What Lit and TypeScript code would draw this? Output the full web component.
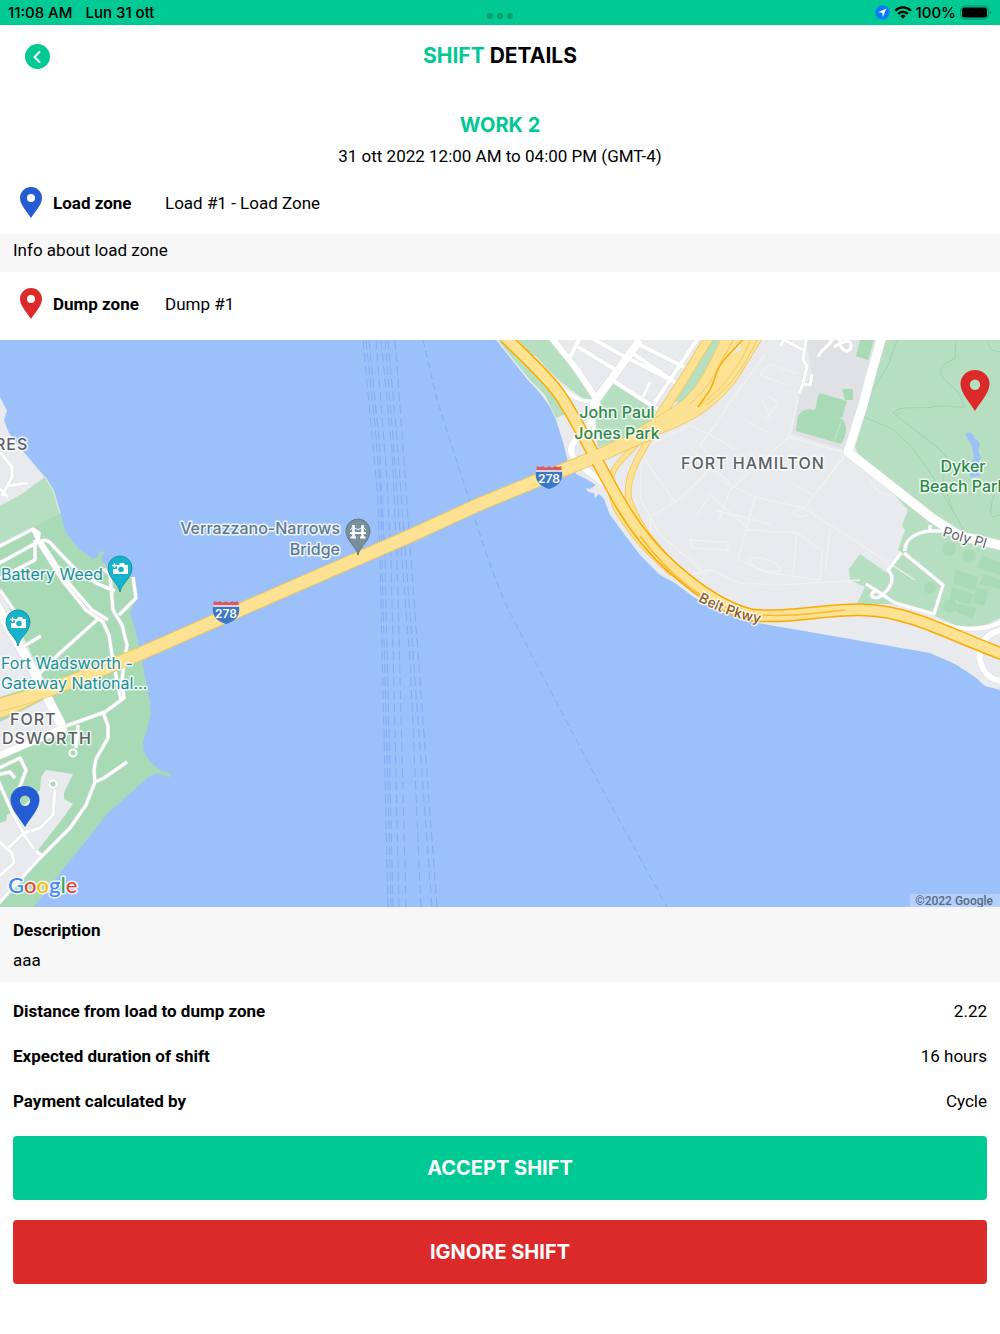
import { LitElement, html, svg, css } from "lit";
import { customElement } from "lit/decorators.js";

type Label = { x: number; y: number; text: string; kind: string };

const labels: Label[] = [
  { x: -5, y: 450, text: "RES", kind: "area" },
  { x: 681, y: 469, text: "FORT HAMILTON", kind: "area" },
  { x: 10, y: 725, text: "FORT", kind: "area" },
  { x: 2, y: 744, text: "DSWORTH", kind: "area" },
  { x: 617, y: 418, text: "John Paul", kind: "park middle" },
  { x: 617, y: 439, text: "Jones Park", kind: "park middle" },
  { x: 963, y: 472, text: "Dyker", kind: "park middle" },
  { x: 963, y: 492, text: "Beach Park", kind: "park middle" },
  { x: 340, y: 534, text: "Verrazzano-Narrows", kind: "bridge end" },
  { x: 340, y: 555, text: "Bridge", kind: "bridge end" },
  { x: 1, y: 580, text: "Battery Weed", kind: "sight" },
  { x: 1, y: 669, text: "Fort Wadsworth -", kind: "sight" },
  { x: 1, y: 689, text: "Gateway National…", kind: "sight" },
];

const ferryLines = [
  "M363 340L371 425L378 500L380 560L388 907",
  "M366 340L375 425L381 500L382 560L391 907",
  "M369 340L379 440L385 560L393 907",
  "M376 340L387 480L391 560L399 907",
  "M381 340L392 450L397 560L406 907",
  "M385 340L394 450L402 560L410 660L421 907",
  "M388 340L397 440L406 560L432 907",
  "M395 340L404 460L411 560L437 907",
];

/* Local streets around the two shores: stroke width and course. */
const streets: Array<[number, string]> = [
  [9, "M-4 604L32 668L62 726"],
  [7, "M-4 757L66 727"],
  [3, "M-4 548L33 529L39 533L38 542L-4 565M35 540L35 560L0 578M33 530L40 545L62 580L86 610L103 622L109 635L112 655L119 690L121 700"],
  [3, "M38 543C44 538 49 540 54 547L78 572L98 584L115 591M41 541L66 580L92 610L108 620M104 569L110 575L113 610L122 625L127 645L124 665L122 680L124 698L105 712L66 726"],
  [3, "M133 577L136 598L119 615M98 619L60 653L38 675M0 590L15 612M24 646L41 636"],
  [3, "M103 712L108 726L108 738L96 759L94 770L95 782L86 805L70 828L38 860L-3 905M95 782L104 778L127 762M78 725L76 748"],
  [3, "M55 790L53 815L40 828L24 833L8 848M-3 778L12 812L25 836L34 849M36 851L41 855M-3 840L12 853L14 863L-3 878"],
  [3, "M-3 769L20 758L26 770L18 792M-3 775L10 772L15 778M0 452L12 467L12 477L2 496M8 486L26 483L28 484M-2 487L8 497"],
  [8, "M640 340L596 400L592 415"],
  [6, "M551 337L575 367L598 401"],
  [4, "M533 357L560 386C575 400 585 403 598 401"],
  [6, "M597 400C600 425 573 435 571 448C569 460 590 473 610 488"],
  [4, "M592 402L594 430L598 440"],
  [4, "M580 338L568 361M578 347L614 369M584 334L620 354L682 386M640 345L690 370M698 338L654 404M612 380L657 409M632 353L673 381"],
  [3, "M650 382L643 397M780 346L784 340L803 350M806 340L803 360L807 366L803 384L810 385L812 374M803 384L799 393M842 335C834 348 851 358 851 345C850 338 842 342 834 347M818 357C822 347 830 347 833 338"],
  [9, "M882 336L870 378L863 405L848 452L932 518L960 536L1004 546"],
  [3, "M905 551C904 539 917 532 930 531L946 531M930 532L930 525"],
  [3, "M904 553L943 585L934 614L895 603L874 589L866 584M901 553L888 570C896 578 891 588 882 595C875 602 866 594 876 591"],
  [4, "M1003 621C980 634 955 629 933 621"],
  [6, "M1003 630C984 632 976 650 981 664C985 676 994 681 1004 681"],
];

const faintStreets =
  "M798 400L789 437L730 490L719 520M789 437L847 453L804 508L755 497L720 480M804 508L915 580M755 497L738 560L770 573L820 580L822 550L797 533L745 530M640 453L675 502L650 517L652 560L690 575L710 570L740 583L780 585L860 580M641 460L641 500L660 535L690 560L706 575M675 502L700 480L715 460L700 445L715 425L735 395L765 355M640 450L690 425L720 440L735 450M697 515L710 495L750 530M690 540L728 542L728 550L692 548ZM715 510L770 524M797 533L793 575M830 530L825 570M770 364L797 374M768 365L760 375L790 386M768 396L779 403L765 420M762 398L770 418M745 420L770 434M690 448L730 483M790 482L813 495M804 508C792 510 790 515 800 517L808 515M871 480C875 492 885 496 894 496M748 560C760 553 783 565 780 570C770 575 755 570 748 560";

const darkGreens =
  "M819 393L847 401L842 418L815 410ZM797 422C797 412 805 407 815 410L838 417C847 420 849 432 841 444L796 431ZM842 389L853 389L853 400L845 400ZM860 340L874 340L868 360L856 356ZM982 555L1000 563V575L977 567ZM956 570L978 577L975 590L953 583ZM952 587L974 594L970 605L950 598ZM984 574L1000 580V589L980 584ZM977 588L988 590L984 606L973 602ZM958 604L976 608L973 619L956 612Z";

function road(d: string, width: number, fill: string, edge: string, casing = 2) {
  return svg`
    <path d=${d} fill="none" stroke=${edge} stroke-width=${width + casing} stroke-linejoin="round" />
    <path d=${d} fill="none" stroke=${fill} stroke-width=${width} stroke-linejoin="round" />`;
}

function shield(x: number, y: number) {
  return svg`
    <g transform="translate(${x} ${y})">
      <path d="M-13 -6C-14 2 -12 8 0 12C12 8 14 2 13 -6Z" fill="#3d78c8" />
      <path d="M-12 -11Q-9 -9 -6 -11Q-3 -8 0 -11Q3 -8 6 -11Q9 -9 12 -11L13 -6H-13Z" fill="#d9595e" />
      <path d="M-13 -6H13" stroke="#fff" stroke-width="1.4" />
      <text class="shield" x="0" y="6">278</text>
    </g>`;
}

const DROP = "M0 36C-1 28 -12 22 -12 12A12 12 0 0 1 12 12C12 22 1 28 0 36Z";

function cameraPin(x: number, y: number) {
  return svg`
    <g transform="translate(${x} ${y})">
      <path d=${DROP} fill="#17b2cb" stroke="#1295a9" />
      <path d="M-3 9L-1 9L0 7H4L5 9H8V18H-7V13H-3Z" fill="#fff" />
      <circle cx="1" cy="13.500" r="2.800" fill="#17b2cb" />
      <path d="M-5.500 7V12M-8 9.500H-3" stroke="#fff" stroke-width="1.300" />
    </g>`;
}

function bridgePin(x: number, y: number) {
  return svg`
    <g transform="translate(${x} ${y})">
      <path d=${DROP} fill="#78909c" stroke="#5f7682" />
      <path d="M-4.500 6V19M4.500 6V19" stroke="#fff" stroke-width="2.500" />
      <path d="M-8 14H8M-7.500 18.500H-2M2 18.500H7.500" stroke="#fff" stroke-width="2" />
      <path d="M-8 11Q-6 10 -5 7Q0 14 5 7Q6 10 8 11" stroke="#fff" fill="none" />
    </g>`;
}

function zonePin(x: number, y: number, fill: string) {
  return svg`
    <path transform="translate(${x} ${y})" fill=${fill} fill-rule="evenodd"
      d="M0 41C-4 34 -14.500 23 -14.500 14A14.500 14 0 0 1 14.500 14C14.500 23 4 34 0 41ZM0 9.500A5.200 5.200 0 1 0 0 19.900A5.200 5.200 0 1 0 0 9.500Z" />`;
}

@customElement("zone-map")
export class ZoneMap extends LitElement {
  static styles = css`
    :host {
      display: block;
    }
    svg {
      display: block;
      width: 100%;
      height: auto;
      background: #9cc0fa;
    }
    text {
      font-family: Inter, "Liberation Sans", sans-serif;
      font-size: 16px;
      paint-order: stroke;
      stroke: #fff;
      stroke-opacity: 0.8;
      stroke-width: 3px;
      stroke-linejoin: round;
    }
    .middle {
      text-anchor: middle;
    }
    .end {
      text-anchor: end;
    }
    .area {
      font-weight: 500;
      letter-spacing: 1px;
      fill: #5b5f66;
    }
    .park {
      fill: #2c8a4b;
      font-weight: 500;
    }
    .bridge {
      fill: #5f7b8b;
      font-weight: 500;
    }
    .sight {
      fill: #1a8f9b;
    }
    .street {
      font-size: 14px;
      fill: #5f6368;
    }
    .parkway {
      fill: #8a5a2b;
      font-weight: 500;
    }
    .shield {
      font-size: 12px;
      font-weight: 600;
      fill: #fff;
      stroke: none;
      text-anchor: middle;
    }
    .google {
      font-family: Lato, sans-serif;
      font-size: 22px;
      font-weight: 500;
    }
    .g-blue {
      fill: #4285f4;
    }
    .g-red {
      fill: #ea4335;
    }
    .g-yellow {
      fill: #fbbc04;
    }
    .g-green {
      fill: #34a853;
    }
    .copyright {
      font-family: Roboto, "Liberation Sans", sans-serif;
      font-size: 12px;
      font-weight: 500;
      fill: #5b6a84;
      stroke: none;
    }
  `;

  render() {
    const bridge = "M-6 706C30 698 60 687 142 653L226 616L410 536L480 504L595 457L650 433";
    const belt =
      "M505 337C525 357 545 374 560 395C575 418 584 436 595 457L613 490C630 522 650 548 674 569C700 592 725 609 752 615C790 619 830 608 865 610C910 611 950 635 1005 655";
    return html`
      <svg viewBox="0 340 1000 567" role="img" aria-label="Map of load and dump zones">
        <path fill="#e8eaed" d="M0 397L7 411L4 420L9 433L22 450L45 477L60 513L38 640L0 640Z" />
        <path fill="#b6dfc1" d="M0 506L22 494L45 477L53 490L60 513L40 530L0 550Z" />
        <path
          fill="#a8dab5"
          d="M0 545L38 525L61 513L64 528L69 537L80 550L93 559L98 557L99 552L103 551L104 554L101 558L103 563L110 569L132 577L137 598L130 612L135 629L142 660L150 703L151 713L148 727L143 742L143 750L150 762L160 770L172 774L170 777L157 773L150 776L107 814L90 836L60 873L34 907L0 907Z"
        />
        <path
          fill="#e8eaed"
          d="M0 588L14 618L42 676L40 684L0 697ZM0 722L43 700L60 727L0 752ZM0 823L6 821L7 815L24 805L40 790L41 777L46 770L73 774L64 793L64 799L73 804L60 822L38 850L42 857L0 903Z"
        />
        <path d="M45 477L53 490L60 513" fill="none" stroke="#d5e6da" stroke-width="1.5" />

        <path
          fill="#e8eaed"
          d="M496 340L512 360L527 379L540 393L550 407L556 420L563 442L568 462L576 474L588 480L596 485L590 489L586 488L588 492L594 493L595 498L599 494L604 499L610 515L625 535L640 555L660 575L675 583L692 596L720 612L758 623L850 639L930 653L955 664L975 677L985 686L1000 690V340Z"
        />
        <path fill="#b6dfc1" d="M498 340L512 358L530 380L545 395L556 418L567 413L545 380L515 340ZM518 340H554L572 368L598 400L586 401L560 381L535 357Z" />
        <path fill="#b6dfc1" d="M614 381L657 408L648 430L598 447L593 420L600 402ZM708 340H726L684 405L671 400Z" />
        <path fill="#dfe1e5" d="M806 340H880L846 450L792 434L800 392L812 375Z" />
        <path
          fill="#b6dfc1"
          d="M882 340L863 405L853 440L857 452L908 510L902 525L905 530L898 550L903 553L887 573L860 554L849 569L850 580L865 587L857 604L890 604L930 614L960 627L985 625L1000 618V340Z"
        />
        <path fill="#a8dab5" d=${darkGreens} />
        <path d="M841 422L835 439" stroke="#c3e5cc" />
        <g fill="#a8dab5">
          <circle cx="949" cy="549" r="7" />
          <circle cx="969" cy="556" r="7" />
          <circle cx="950" cy="606" r="7" />
          <circle cx="930" cy="588" r="6" />
        </g>
        <g fill="none" stroke="#a0d2ad">
          <path d="M897 340L888 366L872 391L864 417L892 429L912 447L935 480L954 513L944 485L942 470C955 457 938 449 928 440L893 413C898 405 920 409 932 407C945 404 955 408 965 407L958 392L943 378C937 368 945 362 955 359L956 340" />
          <path d="M954 513L966 534M987 340L991 350L1000 352M1000 480C994 490 988 515 992 517L1000 515" />
        </g>
        <path fill="#9cc0fa" d="M965 435C968 431 974 433 974 438C980 440 981 446 978 450L981 458L978 464L980 476L971 477L967 468L974 458L972 446Z" />

        <g fill="none" stroke="#84acf4">
          ${ferryLines.map((d) => svg`<path d=${d} stroke-dasharray="9 4" />`)}
          <path
            stroke-dasharray="7 4"
            d="M423 340L437 400L468 496C478 530 494 580 510 613L540 671L600 785L667 907"
          />
        </g>

        <path d=${faintStreets} fill="none" stroke="#f1f1ef" stroke-width="1.3" />
        ${streets.map(
          ([w, d]) => svg`<path d=${d} fill="none" stroke="#dcdfe3" stroke-width=${w + 1} stroke-linejoin="round" />`,
        )}
        ${streets.map(
          ([w, d]) => svg`<path d=${d} fill="none" stroke="#fff" stroke-width=${w} stroke-linejoin="round" />`,
        )}
        <g fill="#a8dab5" stroke="#fff" stroke-width="2">
          <circle cx="53" cy="784" r="3.5" />
          <circle cx="73" cy="753" r="3.5" />
        </g>

        ${road("M-6 716C10 712 22 705 40 696", 6, "#fde293", "#f1cb67")}
        ${road("M643 434C636 450 618 458 612 474C605 500 622 520 642 545L672 574", 4, "#fde293", "#f1cb67")}
        ${road("M658 424C643 450 624 475 629 500C640 530 655 545 672 564", 5, "#fde293", "#f1cb67")}
        ${road("M710 336L683 380L656 422", 8, "#fde293", "#f1cb67")}
        <path
          fill="#fde293"
          stroke="#f1cb67"
          d="M722 336C712 358 703 378 690 393C682 402 672 408 660 415L630 433L640 443L662 433C680 426 695 419 707 410C722 398 732 388 740 375L764 336Z"
        />
        <path d="M640 430L664 419L678 418L645 438L620 447Z" fill="#fde293" />
        <path fill="none" stroke="#f1cb67" d="M735 336C722 362 712 385 690 404M752 336C742 362 728 385 700 405M759 336C745 365 733 385 706 405M716 372C722 355 730 350 735 336" />
        <path d="M741 342L731 355L740 350Z" fill="#e8eaed" />
        <path d="M746 336L724 360C716 368 716 378 710 390L698 407" fill="none" stroke="#f9ab00" stroke-width="1.5" />
        ${road(bridge, 12, "#fde293", "#ecc966")}
        ${road(belt, 10, "#fde293", "#f9ab00", 3)}
        <path d="M640 536C670 575 700 603 748 614C785 618 815 613 845 610" fill="none" stroke="#f9b932" stroke-width="1.5" />
        <path d="M580 463L612 450" stroke="#fde293" stroke-width="12" />

        ${shield(549, 477)} ${shield(226, 612)}
        ${labels.map((l) => svg`<text class=${l.kind} x=${l.x} y=${l.y}>${l.text}</text>`)}
        <path id="belt-path" d="M698 601C712 608 726 617 768 625" fill="none" />
        <text class="street parkway"><textPath href="#belt-path">Belt Pkwy</textPath></text>
        <text class="street" transform="translate(942 536) rotate(16)">Poly Pl</text>

        ${cameraPin(120, 556)} ${cameraPin(18, 610)} ${bridgePin(358, 519)}
        ${zonePin(25, 786, "#265cd3")} ${zonePin(975, 370, "#dc2a2a")}

        <text class="google" x="8" y="893"
          ><tspan class="g-blue">G</tspan><tspan class="g-red">o</tspan><tspan class="g-yellow">o</tspan
          ><tspan class="g-blue">g</tspan><tspan class="g-green">l</tspan><tspan class="g-red">e</tspan></text
        >
        <rect x="910" y="894" width="90" height="13" fill="#fff" fill-opacity="0.25" />
        <text class="copyright end" x="993" y="905">©2022 Google</text>
      </svg>
    `;
  }
}

@customElement("app-root")
export class AppRoot extends LitElement {
  static styles = css`
    :host {
      display: block;
      background: #fff;
      color: #000;
      font: 17px/24px Roboto, "Liberation Sans", sans-serif;
    }
    * {
      box-sizing: border-box;
    }
    h1,
    h2,
    h3,
    p,
    dl,
    dd {
      margin: 0;
    }
    h1,
    h2,
    .action {
      font-family: Inter, "Liberation Sans", sans-serif;
      font-weight: 700;
    }
    .status {
      display: grid;
      grid-template-columns: 1fr auto 1fr;
      align-items: center;
      height: 25px;
      padding: 0 8px;
      background: #00c993;
      font: 500 15px/24px Inter, "Liberation Sans", sans-serif;
    }
    .clock {
      display: flex;
      gap: 13px;
    }
    .dots {
      display: flex;
      gap: 4px;
      padding-top: 6px;
    }
    .dot {
      width: 6px;
      height: 6px;
      border-radius: 50%;
      background: #00a06c;
    }
    .indicators {
      display: flex;
      align-items: center;
      justify-content: flex-end;
      gap: 4px;
    }
    svg {
      display: block;
    }
    .header {
      display: grid;
      grid-template-columns: 25px 1fr 25px;
      align-items: center;
      padding: 15px 25px;
    }
    .back {
      width: 25px;
      height: 25px;
      padding: 0;
      border: 0;
      border-radius: 50%;
      background: #00c993;
      cursor: pointer;
    }
    h1 {
      font-size: 21px;
      line-height: 32px;
      text-align: center;
    }
    .accent {
      color: #00c993;
    }
    .summary {
      padding: 24px 13px 0;
      text-align: center;
    }
    h2 {
      font-size: 20px;
      line-height: 28px;
      color: #00c993;
    }
    .when {
      padding-top: 5px;
    }
    .zone {
      display: grid;
      grid-template-columns: 22px 101px 1fr;
      column-gap: 11px;
      align-items: center;
      padding: 19px 13px 16px 20px;
    }
    .dump {
      padding-top: 16px;
      padding-bottom: 21px;
    }
    h3,
    dt {
      font-size: 17px;
      line-height: 24px;
      font-weight: 700;
    }
    .note {
      padding: 4px 13px 10px;
      background: #f7f7f7;
    }
    .description {
      display: grid;
      gap: 6px;
      padding: 11px 13px 10px;
      background: #f7f7f7;
    }
    .facts {
      display: grid;
      gap: 21px;
      padding: 17px 13px 23px;
    }
    .fact {
      display: flex;
      justify-content: space-between;
    }
    .actions {
      display: grid;
      gap: 20px;
      padding: 0 13px 50px;
    }
    .action {
      height: 64px;
      border: 0;
      border-radius: 4px;
      color: #fff;
      font-size: 20px;
      cursor: pointer;
    }
    .accept {
      background: #00c993;
    }
    .ignore {
      background: #dc2a2a;
    }
  `;

  private facts = [
    ["Distance from load to dump zone", "2.22"],
    ["Expected duration of shift", "16 hours"],
    ["Payment calculated by", "Cycle"],
  ];

  private pin(fill: string) {
    return html`<svg width="22" height="31" viewBox="0 0 22 31" aria-hidden="true">
      <path
        fill=${fill}
        fill-rule="evenodd"
        d="M11 31C8 26 0 18 0 11A11 11 0 0 1 22 11C22 18 14 26 11 31ZM11 7A4 4 0 1 0 11 15A4 4 0 1 0 11 7Z"
      />
    </svg>`;
  }

  private zone(kind: string, title: string, value: string, fill: string) {
    return html`<section class="zone ${kind}">
      ${this.pin(fill)}
      <h3>${title}</h3>
      <p>${value}</p>
    </section>`;
  }

  render() {
    return html`
      <div class="status">
        <div class="clock"><span>11:08 AM</span><span>Lun 31 ott</span></div>
        <div class="dots"><i class="dot"></i><i class="dot"></i><i class="dot"></i></div>
        <div class="indicators">
          <svg width="15" height="15" viewBox="0 0 15 15" aria-hidden="true">
            <circle cx="7.5" cy="7.5" r="7.2" fill="#0a7aff" />
            <path d="M11.500 3.500L3 7.300L7.300 7.800L7.800 12Z" fill="#fff" />
          </svg>
          <svg width="18" height="13" viewBox="0 0 18 13" aria-hidden="true">
            <g fill="none" stroke="#000" stroke-width="2.2">
              <path d="M1.200 4.700A11 11 0 0 1 16.800 4.700" />
              <path d="M4.200 7.900A6.800 6.800 0 0 1 13.800 7.900" />
            </g>
            <path d="M9 12.700L6.300 10A3.900 3.900 0 0 1 11.700 10Z" />
          </svg>
          <span>100%</span>
          <svg width="32" height="15" viewBox="0 0 32 15" aria-hidden="true">
            <rect x="0.500" y="1" width="28" height="13" rx="4" fill="none" stroke="#008c64" />
            <rect x="2" y="2.500" width="25" height="10" rx="2.500" />
            <path d="M30 5.500Q32 7.500 30 9.500Z" fill="#007a58" />
          </svg>
        </div>
      </div>

      <header class="header">
        <button class="back" aria-label="Back">
          <svg width="25" height="25" viewBox="0 0 25 25" aria-hidden="true">
            <path d="M14.500 8L9.500 13L14.500 18" fill="none" stroke="#fff" stroke-width="2" stroke-linecap="round" stroke-linejoin="round" />
          </svg>
        </button>
        <h1><span class="accent">SHIFT</span> DETAILS</h1>
      </header>

      <main>
        <section class="summary">
          <h2>WORK 2</h2>
          <p class="when">31 ott 2022 12:00 AM to 04:00 PM (GMT-4)</p>
        </section>
        ${this.zone("load", "Load zone", "Load #1 - Load Zone", "#265cd3")}
        <p class="note">Info about load zone</p>
        ${this.zone("dump", "Dump zone", "Dump #1", "#dc2a2a")}
        <zone-map></zone-map>
        <section class="description">
          <h3>Description</h3>
          <p>aaa</p>
        </section>
        <dl class="facts">
          ${this.facts.map(
            ([term, value]) => html`<div class="fact">
              <dt>${term}</dt>
              <dd>${value}</dd>
            </div>`,
          )}
        </dl>
        <div class="actions">
          <button class="action accept">ACCEPT SHIFT</button>
          <button class="action ignore">IGNORE SHIFT</button>
        </div>
      </main>
    `;
  }
}
